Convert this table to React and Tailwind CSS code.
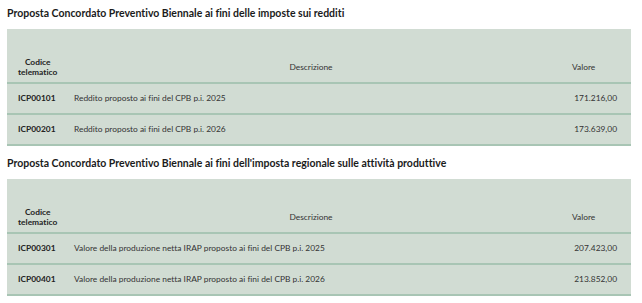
import React from "react";

const sections = [
  {
    title: "Proposta Concordato Preventivo Biennale ai fini delle imposte sui redditi",
    rows: [
      ["ICP00101", "Reddito proposto ai fini del CPB p.i. 2025", "171.216,00"],
      ["ICP00201", "Reddito proposto ai fini del CPB p.i. 2026", "173.639,00"],
    ],
  },
  {
    title:
      "Proposta Concordato Preventivo Biennale ai fini dell'imposta regionale sulle attività produttive",
    rows: [
      ["ICP00301", "Valore della produzione netta IRAP proposto ai fini del CPB p.i. 2025", "207.423,00"],
      ["ICP00401", "Valore della produzione netta IRAP proposto ai fini del CPB p.i. 2026", "213.852,00"],
    ],
  },
];

function Section({ title, rows, first }) {
  return (
    <div className={first ? "" : "mt-[4px]"}>
      <div className="pt-[6px] pb-[9px] pl-[7px] text-[10.5px] leading-[14px] font-bold text-[#1b1b1b]">
        {title}
      </div>
      <div className="mx-[7px] w-[624px] bg-[#d1dcd3] text-[8.4px] text-[#333]">
        <div className="flex h-[55px] items-center pt-[29px] pb-[6px] border-b-2 border-[#a8c5b4] leading-[10px]">
          <div className="w-[67px] pl-[11px] shrink-0">
            <div className="inline-block text-center font-bold text-[#222]">
              Codice
              <br />
              telematico
            </div>
          </div>
          <div className="flex-1 text-center">Descrizione</div>
          <div className="w-[83px] shrink-0 pl-[24px]">Valore</div>
        </div>
        {rows.map((r) => (
          <div
            key={r[0]}
            className="flex h-[31px] items-center border-b-2 border-[#a8c5b4]"
          >
            <div className="w-[67px] pl-[11px] shrink-0 font-bold text-[#222]">{r[0]}</div>
            <div className="flex-1">{r[1]}</div>
            <div className="w-[83px] shrink-0 pr-[14px] text-right">{r[2]}</div>
          </div>
        ))}
      </div>
    </div>
  );
}

export default function App() {
  return (
    <div className="w-[642px] h-[303px] bg-white overflow-hidden [font-family:Lato,sans-serif] [font-variant-ligatures:none]">
      {sections.map((s, i) => (
        <Section key={i} {...s} first={i === 0} />
      ))}
    </div>
  );
}
